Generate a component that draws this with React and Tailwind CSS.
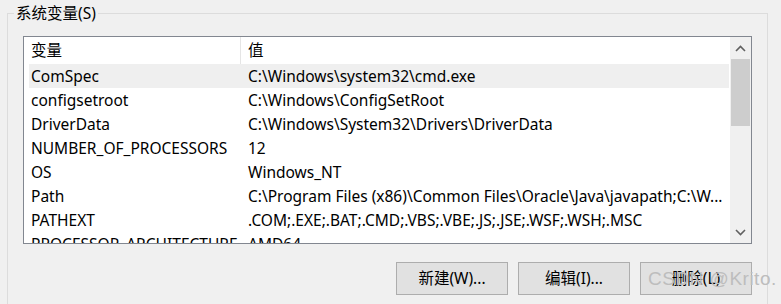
const font = { fontFamily: '"Noto Sans", "Noto Sans CJK SC", sans-serif' };

const rows = [
  ["ComSpec", "C:\\Windows\\system32\\cmd.exe"],
  ["configsetroot", "C:\\Windows\\ConfigSetRoot"],
  ["DriverData", "C:\\Windows\\System32\\Drivers\\DriverData"],
  ["NUMBER_OF_PROCESSORS", "12"],
  ["OS", "Windows_NT"],
  ["Path", "C:\\Program Files (x86)\\Common Files\\Oracle\\Java\\javapath;C:\\W..."],
  ["PATHEXT", ".COM;.EXE;.BAT;.CMD;.VBS;.VBE;.JS;.JSE;.WSF;.WSH;.MSC"],
  ["PROCESSOR_ARCHITECTURE", "AMD64"],
];

function Chevron({ up }) {
  return (
    <svg width="11" height="7" viewBox="0 0 11 7">
      <path
        d={up ? "M1 6 L5.5 1.5 L10 6" : "M1 1 L5.5 5.5 L10 1"}
        fill="none"
        stroke="#606060"
        strokeWidth="1.6"
      />
    </svg>
  );
}

export default function App() {
  return (
    <div className="relative w-[781px] h-[304px] bg-[#f0f0f0] overflow-hidden text-[15.5px] text-black" style={font}>
      {/* group box */}
      <div className="absolute left-[7px] top-[13px] w-[761px] h-[320px] border border-[#dcdcdc]" />
      <div className="relative pl-[14px] pt-[2px]">
        <span className="bg-[#f0f0f0] px-[2px] leading-[22px]">系统变量(S)</span>
      </div>

      <div className="relative ml-[23px] mt-[11px] w-[729px] h-[208px] border border-[#828790] bg-white flex">
        <div className="flex-1 overflow-hidden">
          {/* header */}
          <div className="flex h-[27px] items-center">
            <div className="w-[217px] pl-[7px] border-r border-[#e5e5e5] h-full flex items-center">变量</div>
            <div className="pl-[7px]">值</div>
          </div>
          {rows.map(([k, v], i) => (
            <div
              key={k}
              className={`flex h-[24px] items-center ml-[5px] whitespace-nowrap ${i === 0 ? "bg-[#efefef]" : ""}`}
            >
              <div className="w-[212px] pl-[2px] overflow-hidden">{k}</div>
              <div className="pl-[7px]">{v}</div>
            </div>
          ))}
        </div>
        {/* scrollbar */}
        <div className="w-[21px] bg-[#f0f0f0] flex flex-col items-center ml-[1px]">
          <div className="h-[22px] flex items-center justify-center">
            <Chevron up />
          </div>
          <div className="w-[19px] h-[67px] bg-[#cdcdcd]" />
          <div className="flex-1" />
          <div className="h-[22px] flex items-center justify-center">
            <Chevron />
          </div>
        </div>
      </div>

      <div className="relative flex justify-end gap-[10px] mt-[18px] pr-[29px]">
        {["新建(W)...", "编辑(I)...", "删除(L)"].map((t) => (
          <button key={t} className="w-[112px] h-[33px] bg-[#e1e1e1] border border-[#adadad] text-[15.5px]">
            {t}
          </button>
        ))}
      </div>

      <div className="absolute left-[648px] top-[265px] text-[19px] text-[#bdbdbd] tracking-[0.5px]" style={{ fontFamily: '"Liberation Sans", sans-serif' }}>
        CSDN @Krito.
      </div>
    </div>
  );
}
